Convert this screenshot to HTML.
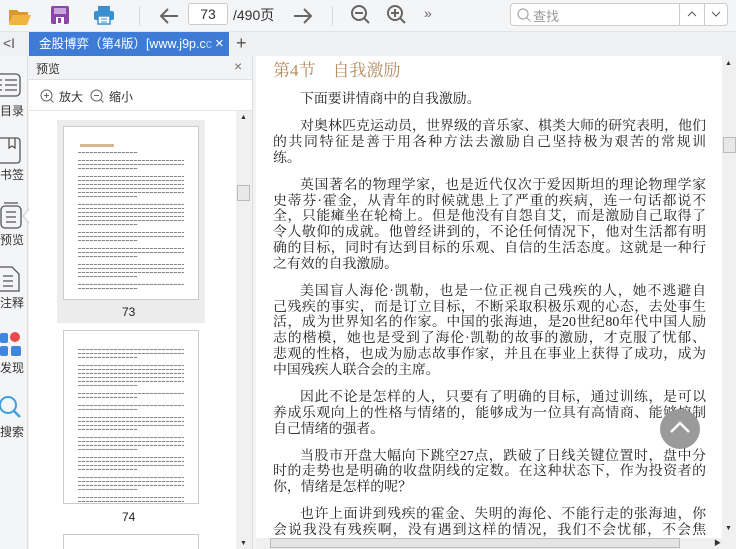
<!DOCTYPE html>
<html><head><meta charset="utf-8"><style>
*{margin:0;padding:0;box-sizing:border-box}
html,body{width:736px;height:549px;overflow:hidden}
body{background:#f2f3f5;font-family:"Liberation Sans","Noto Sans CJK SC",sans-serif;position:relative}
.abs{position:absolute}
.tb{left:0;top:0;width:736px;height:32px;background:#f4f5f7;border-bottom:1px solid #e3e4e6}
.tabbar{left:0;top:32px;width:736px;height:24px;background:#eef0f2}
.tab{left:29px;top:32px;width:200px;height:24px;background:#3e7bd6;color:#fff;font-size:12.5px;line-height:24px;padding-left:10px;white-space:nowrap}
.side{left:0;top:56px;width:28px;height:493px;background:#f4f5f7;border-right:1px solid #dcdde0}
.panel{left:29px;top:56px;width:224px;height:493px;background:#fff}
.main{left:256px;top:56px;width:466px;height:482px;background:#fff;overflow:hidden}
.txt{font-family:"Liberation Serif","Noto Serif CJK SC",serif;font-size:13.9px;color:#222;left:17px;width:433px}
.l{height:15.8px;line-height:15.8px;text-align:justify;text-align-last:justify;white-space:nowrap;overflow:visible}
.l.e{text-align-last:left}
.p{margin-bottom:11.3px}
.ind{padding-left:27px}
.thumb{background:#fff;border:1px solid #ccc;overflow:hidden}
.tl{position:absolute;left:14px;right:14px;height:1px;background:repeating-linear-gradient(90deg,#888 0 3px,#ddd 3px 4px)}
.lbl{font-size:12px;color:#999}
</style></head><body>
<div class="abs tb"></div>
<svg class="abs" style="left:8px;top:6px" width="24" height="20"><path d="M1 4h8l2 2h9v3H5L1 18z" fill="#d99a2b"/><path d="M5 9h18l-4 10H1z" fill="#f0b440"/></svg>
<svg class="abs" style="left:50px;top:5px" width="20" height="20"><rect x="1" y="1" width="18" height="18" rx="2" fill="#8e44ad"/><rect x="4" y="3" width="12" height="6" fill="#c9a6dc"/><rect x="6" y="12" width="8" height="7" fill="#fff"/><rect x="8" y="13" width="3" height="5" fill="#8e44ad"/></svg>
<svg class="abs" style="left:93px;top:5px" width="22" height="20"><rect x="5" y="1" width="12" height="5" fill="#3a8fd0"/><rect x="1" y="6" width="20" height="9" rx="2" fill="#3a8fd0"/><rect x="5" y="11" width="12" height="8" fill="#fff" stroke="#3a8fd0" stroke-width="1.5"/><path d="M8 14h6M8 17h6" stroke="#3a8fd0"/></svg>
<div class="abs" style="left:139px;top:6px;width:1px;height:20px;background:#d8d8d8"></div>
<svg class="abs" style="left:158px;top:6px" width="22" height="20"><path d="M20 10H3M10 3l-7 7 7 7" stroke="#666" stroke-width="2" fill="none"/></svg>
<div class="abs" style="left:188px;top:3px;width:40px;height:22px;border:1px solid #ccc;border-radius:3px;background:#fff;font-size:14px;text-align:center;line-height:20px;color:#333">73</div>
<div class="abs" style="left:233px;top:5px;font-size:14px;color:#333;line-height:20px">/490页</div>
<svg class="abs" style="left:292px;top:6px" width="22" height="20"><path d="M2 10h17M12 3l7 7-7 7" stroke="#666" stroke-width="2" fill="none"/></svg>
<div class="abs" style="left:332px;top:6px;width:1px;height:20px;background:#d8d8d8"></div>
<svg class="abs" style="left:350px;top:4px" width="22" height="22"><circle cx="9" cy="9" r="7" stroke="#666" stroke-width="2" fill="none"/><path d="M5 9h8M14 14l5 5" stroke="#666" stroke-width="2"/></svg>
<svg class="abs" style="left:386px;top:4px" width="22" height="22"><circle cx="9" cy="9" r="7" stroke="#666" stroke-width="2" fill="none"/><path d="M5 9h8M9 5v8M14 14l5 5" stroke="#666" stroke-width="2"/></svg>
<div class="abs" style="left:424px;top:5px;font-size:14px;color:#666">»</div>
<div class="abs" style="left:510px;top:3px;width:218px;height:23px;border:1px solid #ccc;border-radius:4px;background:#fff"></div>
<svg class="abs" style="left:516px;top:7px" width="16" height="16"><circle cx="7" cy="7" r="5" stroke="#aaa" stroke-width="1.2" fill="none"/><path d="M10.5 10.5l4 4" stroke="#aaa" stroke-width="1.2"/></svg>
<div class="abs" style="left:533px;top:6px;font-size:13px;color:#999">查找</div>
<div class="abs" style="left:679px;top:3px;width:1px;height:23px;background:#ccc"></div>
<div class="abs" style="left:704px;top:3px;width:1px;height:23px;background:#ccc"></div>
<svg class="abs" style="left:686px;top:10px" width="12" height="8"><path d="M2 6l4-4 4 4" stroke="#555" fill="none"/></svg>
<svg class="abs" style="left:710px;top:10px" width="12" height="8"><path d="M2 2l4 4 4-4" stroke="#555" fill="none"/></svg>

<div class="abs tabbar"></div>
<div class="abs" style="left:3px;top:35px;font-size:14px;color:#555">&lt;I</div>
<div class="abs tab">金股博弈（第4版）[www.j9p.c<span style="color:#b8cdee">c</span><span style="position:absolute;left:186px;font-size:15px">×</span></div>
<div class="abs" style="left:236px;top:33px;font-size:18px;color:#555">+</div>

<div class="abs side"></div>
<svg class="abs" style="left:0;top:73px" width="22" height="26"><rect x="-4" y="1" width="24" height="22" rx="4" stroke="#555" stroke-width="1.3" fill="none"/><path d="M5 7h12M5 12h12M5 17h12M0 7h2M0 12h2M0 17h2" stroke="#555" stroke-width="1.3"/></svg>
<div class="abs" style="left:0;top:102px;font-size:12px;color:#333">目录</div>
<svg class="abs" style="left:0;top:137px" width="22" height="28"><rect x="-4" y="1" width="24" height="25" rx="3" stroke="#555" stroke-width="1.3" fill="none"/><path d="M9 1v10l3-2 3 2V1" stroke="#555" stroke-width="1.3" fill="none"/></svg>
<div class="abs" style="left:0;top:166px;font-size:12px;color:#333">书签</div>
<svg class="abs" style="left:0;top:201px" width="24" height="28"><rect x="1" y="5" width="20" height="22" rx="4" stroke="#555" stroke-width="1.3" fill="none"/><path d="M4 2h14M6 11h10M6 16h10M6 21h10" stroke="#555" stroke-width="1.3"/></svg>
<div class="abs" style="left:0;top:231px;font-size:12px;color:#333">预览</div>
<svg class="abs" style="left:22px;top:208px" width="8" height="16"><path d="M8 0L1 8l7 8" fill="#fff" stroke="#ccc"/></svg>
<svg class="abs" style="left:0;top:265px" width="22" height="28"><path d="M-3 2h15l7 7v17H-3z" stroke="#555" stroke-width="1.3" fill="none"/><path d="M3 11h10M3 16h10M3 21h10" stroke="#555" stroke-width="1.3"/></svg>
<div class="abs" style="left:0;top:294px;font-size:12px;color:#333">注释</div>
<svg class="abs" style="left:0;top:332px" width="24" height="26"><rect x="0" y="1" width="8" height="10" rx="2" fill="#3e86e0"/><circle cx="15" cy="5" r="5" fill="#e84a4a"/><rect x="0" y="14" width="8" height="10" rx="2" fill="#3e86e0"/><rect x="11" y="14" width="10" height="10" rx="2" fill="#3e86e0"/></svg>
<div class="abs" style="left:0;top:359px;font-size:12px;color:#333">发现</div>
<svg class="abs" style="left:0;top:395px" width="24" height="28"><circle cx="8" cy="10" r="8" stroke="#3ea0e0" stroke-width="2" fill="none"/><path d="M14 16l6 6" stroke="#3ea0e0" stroke-width="2.5"/></svg>
<div class="abs" style="left:0;top:423px;font-size:12px;color:#333">搜索</div>

<div class="abs panel"></div>
<div class="abs" style="left:29px;top:56px;width:224px;height:24px;background:#f2f3f5;border-bottom:1px solid #e0e0e0"></div>
<div class="abs" style="left:36px;top:60px;font-size:12px;color:#333">预览</div>
<div class="abs" style="left:234px;top:58px;font-size:14px;color:#777">×</div>
<svg class="abs" style="left:40px;top:89px" width="14" height="14"><circle cx="6.5" cy="6.5" r="5.5" stroke="#666" fill="none"/><path d="M4 6.5h5M6.5 4v5M10.5 10.5l3 3" stroke="#666"/></svg>
<div class="abs" style="left:59px;top:88px;font-size:12px;color:#333">放大</div>
<svg class="abs" style="left:90px;top:89px" width="14" height="14"><circle cx="6.5" cy="6.5" r="5.5" stroke="#666" fill="none"/><path d="M4 6.5h5M10.5 10.5l3 3" stroke="#666"/></svg>
<div class="abs" style="left:109px;top:88px;font-size:12px;color:#333">缩小</div>
<div class="abs" style="left:29px;top:110px;width:224px;height:1px;background:#e6e6e6"></div>
<div class="abs" style="left:57px;top:120px;width:148px;height:203px;background:#ececec"></div>
<div class="abs thumb" style="left:63px;top:126px;width:136px;height:174px">
<div class="abs" style="left:16px;top:17px;width:34px;height:3px;background:#d3b894"></div>
<div id="t1"></div>
</div>
<div class="abs lbl" style="left:122px;top:305px;color:#222">73</div>
<div class="abs thumb" style="left:63px;top:330px;width:136px;height:174px"><div id="t2"></div></div>
<div class="abs lbl" style="left:122px;top:510px;color:#222">74</div>
<div class="abs thumb" style="left:63px;top:534px;width:136px;height:15px;border-bottom:none"></div>
<div class="abs" style="left:236px;top:111px;width:16px;height:438px;background:#f0f0f0"></div>
<div class="abs" style="left:237px;top:185px;width:13px;height:16px;background:#e8e8e8;border:1px solid #bbb"></div>
<div class="abs" style="left:240px;top:114px;font-size:7px;color:#333">▲</div>
<div class="abs" style="left:240px;top:540px;font-size:7px;color:#333">▼</div>
<div class="abs" style="left:252px;top:56px;width:4px;height:493px;background:#f2f3f5;border-left:1px solid #ddd"></div>

<div class="abs main">
<div class="abs" style="left:17px;top:0px;font-family:'Liberation Serif','Noto Serif CJK SC',serif;font-size:17px;color:#b58d60">第4节　自我激励</div>
<div class="abs txt" style="top:36px">
<div class="l e ind p">下面要讲情商中的自我激励。</div>
<div class="l ind">对奥林匹克运动员，世界级的音乐家、棋类大师的研究表明，他们</div>
<div class="l">的共同特征是善于用各种方法去激励自己坚持极为艰苦的常规训</div>
<div class="l e p">练。</div>
<div class="l ind">英国著名的物理学家，也是近代仅次于爱因斯坦的理论物理学家</div>
<div class="l">史蒂芬·霍金，从青年的时候就患上了严重的疾病，连一句话都说不</div>
<div class="l">全，只能瘫坐在轮椅上。但是他没有自怨自艾，而是激励自己取得了</div>
<div class="l">令人敬仰的成就。他曾经讲到的，不论任何情况下，他对生活都有明</div>
<div class="l">确的目标，同时有达到目标的乐观、自信的生活态度。这就是一种行</div>
<div class="l e p">之有效的自我激励。</div>
<div class="l ind">美国盲人海伦·凯勒，也是一位正视自己残疾的人，她不逃避自</div>
<div class="l">己残疾的事实，而是订立目标，不断采取积极乐观的心态，去处事生</div>
<div class="l">活，成为世界知名的作家。中国的张海迪，是20世纪80年代中国人励</div>
<div class="l">志的楷模，她也是受到了海伦·凯勒的故事的激励，才克服了忧郁、</div>
<div class="l">悲观的性格，也成为励志故事作家，并且在事业上获得了成功，成为</div>
<div class="l e p">中国残疾人联合会的主席。</div>
<div class="l ind">因此不论是怎样的人，只要有了明确的目标，通过训练，是可以</div>
<div class="l">养成乐观向上的性格与情绪的，能够成为一位具有高情商、能够控制</div>
<div class="l e p">自己情绪的强者。</div>
<div class="l ind">当股市开盘大幅向下跳空27点，跌破了日线关键位置时，盘中分</div>
<div class="l">时的走势也是明确的收盘阴线的定数。在这种状态下，作为投资者的</div>
<div class="l e p">你，情绪是怎样的呢？</div>
<div class="l ind">也许上面讲到残疾的霍金、失明的海伦、不能行走的张海迪，你</div>
<div class="l">会说我没有残疾啊，没有遇到这样的情况，我们不会忧郁，不会焦</div>
</div>
</div>
<div class="abs" style="left:660px;top:409px;width:40px;height:40px;border-radius:50%;background:#9a9a9a"></div>
<svg class="abs" style="left:668px;top:418px" width="24" height="20"><path d="M3 14l9-9 9 9" stroke="#fff" stroke-width="2.5" fill="none"/></svg>
<div class="abs" style="left:722px;top:56px;width:14px;height:482px;background:#f0f0f0"></div>
<div class="abs" style="left:725px;top:60px;font-size:7px;color:#333">▲</div>
<div class="abs" style="left:723px;top:137px;width:13px;height:16px;background:#e8e8e8;border:1px solid #bbb"></div>
<div class="abs" style="left:725px;top:525px;font-size:7px;color:#333">▼</div>
<div class="abs" style="left:256px;top:538px;width:480px;height:11px;background:#f0f0f0"></div>
<div class="abs" style="left:270px;top:538px;width:410px;height:10px;background:#e4e4e4;border:1px solid #bbb"></div>
<div class="abs" style="left:714px;top:538px;font-size:7px;color:#333">▶</div>
<script>
function fill(id,top,rows){var h='';var y=top;rows.forEach(function(r){for(var i=0;i<r;i++){h+='<div class="tl" style="top:'+y+'px;'+(i==r-1?'right:60px':'')+'"></div>';y+=4;}y+=4;});document.getElementById(id).innerHTML=h;}
fill('t1',25,[1,3,6,6,3,3,4,2]);
fill('t2',18,[3,6,2,2,4,4,4,4,4]);
</script>
</body></html>
